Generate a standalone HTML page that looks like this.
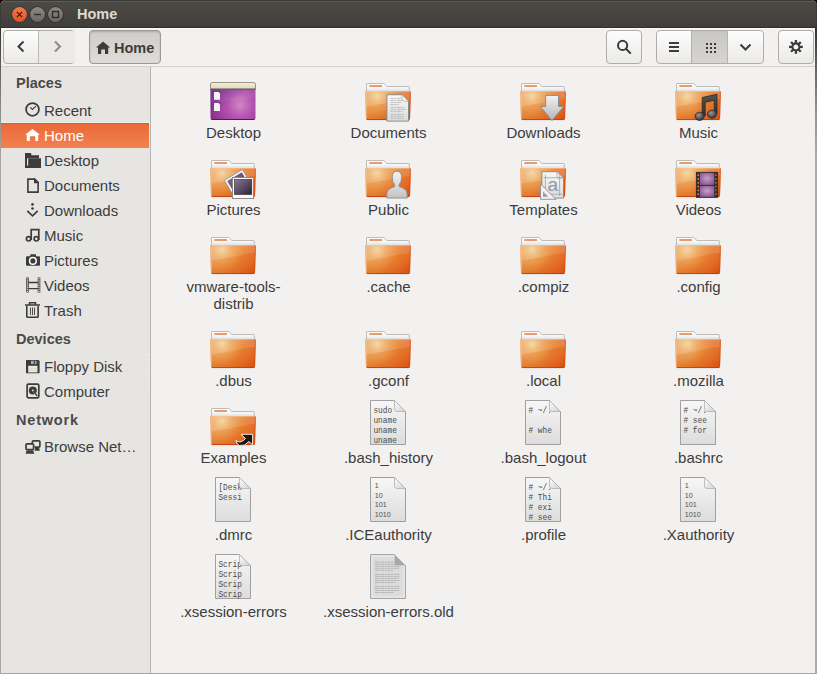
<!DOCTYPE html><html><head><meta charset="utf-8"><title>Home</title><style>
*{margin:0;padding:0;box-sizing:border-box}
html,body{width:817px;height:674px;overflow:hidden}
body{background:#1c0808;font-family:"Liberation Sans",sans-serif;position:relative}
.a{position:absolute}
.t{position:absolute;line-height:17px;white-space:nowrap}
svg{position:absolute;overflow:visible}
</style></head><body>
<div class="a" style="left:0;top:0;width:817px;height:674px;background:#f2f1f0;border-radius:6px 6px 0 0;overflow:hidden">
<div class="a" style="left:0;top:0;width:817px;height:28px;background:linear-gradient(#4f4e49 0,#4b4a45 2px,#403f3b 26px);border-bottom:1px solid #2f2e2b"></div>
<div class="a" style="left:0;top:0;width:817px;height:1px;background:#3a3935"></div>
<div class="a" style="left:5px;top:1px;width:807px;height:1px;background:#5c5b54"></div>
<div class="a" style="left:0;top:3px;width:1px;height:25px;background:#3a3935"></div>
<div class="a" style="left:816px;top:3px;width:1px;height:25px;background:#3a3935"></div>
<div class="a" style="left:0;top:28px;width:817px;height:1px;background:#fbfbfa"></div>
<div class="a" style="left:0;top:66px;width:817px;height:1px;background:#d3d0cc"></div>
<div class="a" style="left:0;top:67px;width:150px;height:607px;background:#e7e5e2"></div>
<div class="a" style="left:150px;top:67px;width:1px;height:607px;background:#b6b3ae"></div>
<div class="a" style="left:0;top:28px;width:1px;height:646px;background:linear-gradient(#2e2d2a 0,#56544f 30px,#8e8c88 80px,#a8a5a1 130px)"></div>
<div class="a" style="left:815px;top:28px;width:2px;height:646px;background:linear-gradient(#34332f 0,#5a5853 30px,#92908c 80px,#aeaba6 130px)"></div>
<div class="a" style="left:0;top:673px;width:817px;height:1px;background:#a8a5a1"></div>
</div>
<svg style="left:0;top:0" width="80" height="28">
<defs>
<linearGradient id="gClose" x1="0" y1="0" x2="0" y2="1"><stop offset="0" stop-color="#f47a4e"/><stop offset="1" stop-color="#e2541d"/></linearGradient>
<linearGradient id="gGray" x1="0" y1="0" x2="0" y2="1"><stop offset="0" stop-color="#8a8983"/><stop offset="1" stop-color="#6a6964"/></linearGradient>
</defs>
<circle cx="19.5" cy="14.5" r="8.2" fill="#34332f"/>
<circle cx="19.5" cy="14.5" r="7.4" fill="url(#gClose)"/>
<path d="M16.9 11.9 L22.1 17.1 M22.1 11.9 L16.9 17.1" stroke="#2a1a14" stroke-width="1.1"/>
<circle cx="37.5" cy="14.5" r="8.2" fill="#2e2d2a"/>
<circle cx="37.5" cy="14.5" r="7.4" fill="url(#gGray)"/>
<path d="M34 14.5 H41" stroke="#2e2d2a" stroke-width="1.4"/>
<circle cx="55.5" cy="14.5" r="8.2" fill="#2e2d2a"/>
<circle cx="55.5" cy="14.5" r="7.4" fill="url(#gGray)"/>
<rect x="52.5" y="11.5" width="6" height="6" fill="none" stroke="#2e2d2a" stroke-width="1.4"/>
</svg>
<div class="t" style="left:77px;top:6px;font-size:14.5px;color:#dfdbd2;font-weight:bold;">Home</div>
<div class="a" style="left:3px;top:30px;width:72px;height:34px;background:linear-gradient(#fdfdfd,#ebeae8);border:1px solid #b1aeaa;border-radius:4px;"></div>
<div class="a" style="left:38px;top:31px;width:37px;height:32px;background:#ecebe9;border-radius:0 3px 3px 0"></div>
<div class="a" style="left:38px;top:31px;width:1px;height:32px;background:#bdbab6"></div>
<svg style="left:0px;top:0px" width="80" height="70"><path d="M23.5 41.5 L18.5 46.5 L23.5 51.5" fill="none" stroke="#3c3c3c" stroke-width="2"/>
<path d="M55 41.5 L60 46.5 L55 51.5" fill="none" stroke="#8c8a86" stroke-width="2"/></svg>
<div class="a" style="left:89px;top:30px;width:72px;height:34px;background:linear-gradient(#d0cecb,#dedcd9);border:1px solid #9d9a96;border-radius:4px;box-shadow:inset 0 1px 2px rgba(0,0,0,0.18)"></div>
<svg style="left:96px;top:41px" width="16" height="14"><path d="M0 6.6 L7.1 0.6 L14.2 6.6 L12.2 6.6 L12.2 13 L9 13 L9 8.4 L5.2 8.4 L5.2 13 L2 13 L2 6.6 Z" fill="#3c3c3c"/></svg>
<div class="t" style="left:114px;top:39.5px;font-size:14.5px;color:#3c3c3c;font-weight:bold;">Home</div>
<div class="a" style="left:606px;top:30px;width:36px;height:34px;background:linear-gradient(#fdfdfd,#ebeae8);border:1px solid #b1aeaa;border-radius:4px;"></div>
<svg style="left:606px;top:30px" width="36" height="34"><circle cx="16.6" cy="15.4" r="4.6" fill="none" stroke="#3c3c3c" stroke-width="2"/><path d="M19.9 18.7 L24.2 23" stroke="#3c3c3c" stroke-width="2" stroke-linecap="round"/></svg>
<div class="a" style="left:656px;top:30px;width:108px;height:34px;background:linear-gradient(#fdfdfd,#ebeae8);border:1px solid #b1aeaa;border-radius:4px;"></div>
<div class="a" style="left:691px;top:31px;width:37px;height:32px;background:linear-gradient(#c4c2bf 0,#cbc9c6 2px,#d6d4d1)"></div>
<div class="a" style="left:691px;top:31px;width:1px;height:32px;background:#b3b0ac"></div>
<div class="a" style="left:727px;top:31px;width:1px;height:32px;background:#b8b5b1"></div>
<svg style="left:656px;top:30px" width="108" height="34">
<rect x="13" y="12" width="10" height="2" fill="#3c3c3c"/><rect x="13" y="16" width="10" height="2" fill="#3c3c3c"/><rect x="13" y="20" width="10" height="2" fill="#3c3c3c"/>
<g fill="#3c3c3c"><rect x="50" y="13" width="2" height="2"/><rect x="50" y="17" width="2" height="2"/><rect x="50" y="21" width="2" height="2"/><rect x="54" y="13" width="2" height="2"/><rect x="54" y="17" width="2" height="2"/><rect x="54" y="21" width="2" height="2"/><rect x="58" y="13" width="2" height="2"/><rect x="58" y="17" width="2" height="2"/><rect x="58" y="21" width="2" height="2"/></g>
<path d="M84.5 14.5 L89.5 19.5 L94.5 14.5" fill="none" stroke="#3c3c3c" stroke-width="2"/>
</svg>
<div class="a" style="left:778px;top:30px;width:36px;height:34px;background:linear-gradient(#fdfdfd,#ebeae8);border:1px solid #b1aeaa;border-radius:4px;"></div>
<svg style="left:778px;top:30px" width="36" height="34"><g transform="translate(17.9,16.9)">
<g fill="#3c3c3c"><rect x="-1.15" y="-6.9" width="2.3" height="3.3" transform="rotate(0)"/><rect x="-1.15" y="-6.9" width="2.3" height="3.3" transform="rotate(45)"/><rect x="-1.15" y="-6.9" width="2.3" height="3.3" transform="rotate(90)"/><rect x="-1.15" y="-6.9" width="2.3" height="3.3" transform="rotate(135)"/><rect x="-1.15" y="-6.9" width="2.3" height="3.3" transform="rotate(180)"/><rect x="-1.15" y="-6.9" width="2.3" height="3.3" transform="rotate(225)"/><rect x="-1.15" y="-6.9" width="2.3" height="3.3" transform="rotate(270)"/><rect x="-1.15" y="-6.9" width="2.3" height="3.3" transform="rotate(315)"/></g>
<circle r="3.5" fill="none" stroke="#3c3c3c" stroke-width="2.1"/></g></svg>
<div class="a" style="left:149px;top:354px;width:1px;height:1px;background:#fdfdfd"></div><div class="a" style="left:149px;top:359px;width:1px;height:1px;background:#fdfdfd"></div><div class="a" style="left:149px;top:364px;width:1px;height:1px;background:#fdfdfd"></div><div class="a" style="left:149px;top:369px;width:1px;height:1px;background:#fdfdfd"></div><div class="a" style="left:149px;top:374px;width:1px;height:1px;background:#fdfdfd"></div><div class="a" style="left:149px;top:379px;width:1px;height:1px;background:#fdfdfd"></div><div class="a" style="left:149px;top:384px;width:1px;height:1px;background:#fdfdfd"></div>
<div class="t" style="left:16px;top:75px;font-size:14.5px;color:#4a4a4a;font-weight:bold;">Places</div>
<div class="a" style="left:1px;top:122px;width:149px;height:1px;background:#eef0ee"></div>
<div class="a" style="left:1px;top:123px;width:148px;height:25px;background:linear-gradient(#e96a38,#f28151);border-top:1px solid #e05c26"></div>
<div class="t" style="left:44px;top:101.5px;font-size:15px;color:#3c3c3c;">Recent</div>
<div class="t" style="left:44px;top:126.5px;font-size:15px;color:#ffffff;">Home</div>
<div class="t" style="left:44px;top:151.5px;font-size:15px;color:#3c3c3c;">Desktop</div>
<div class="t" style="left:44px;top:176.5px;font-size:15px;color:#3c3c3c;">Documents</div>
<div class="t" style="left:44px;top:201.5px;font-size:15px;color:#3c3c3c;">Downloads</div>
<div class="t" style="left:44px;top:226.5px;font-size:15px;color:#3c3c3c;">Music</div>
<div class="t" style="left:44px;top:251.5px;font-size:15px;color:#3c3c3c;">Pictures</div>
<div class="t" style="left:44px;top:276.5px;font-size:15px;color:#3c3c3c;">Videos</div>
<div class="t" style="left:44px;top:301.5px;font-size:15px;color:#3c3c3c;">Trash</div>
<div class="t" style="left:16px;top:331px;font-size:14.5px;color:#4a4a4a;font-weight:bold;">Devices</div>
<div class="t" style="left:44px;top:357.5px;font-size:15px;color:#3c3c3c;">Floppy Disk</div>
<div class="t" style="left:44px;top:382.5px;font-size:15px;color:#3c3c3c;">Computer</div>
<div class="t" style="left:16px;top:411.5px;font-size:14.5px;color:#4a4a4a;font-weight:bold;letter-spacing:0.8px;">Network</div>
<div class="t" style="left:44px;top:438px;font-size:15px;color:#3c3c3c;">Browse Net…</div>
<svg style="left:0;top:0" width="150" height="470">
<circle cx="32.5" cy="109.4" r="6.4" fill="none" stroke="#3c3c3c" stroke-width="1.75"/>
<path d="M30.3 107.3 L32.5 109.5 L35.8 106.2" fill="none" stroke="#3c3c3c" stroke-width="1.2"/>
<path d="M25 134.8 L32.5 128.9 L40 134.8 L38.2 134.8 L38.2 141 L35.3 141 L35.3 136.2 L29.9 136.2 L29.9 141 L26.8 141 L26.8 134.8 Z" fill="#fff"/>
<path d="M25 153 H31 L31.5 155.2 H39 V158.3 H27 V168 H25 Z" fill="#3c3c3c"/>
<rect x="28.2" y="158.3" width="12.8" height="9.7" fill="#3c3c3c"/>
<rect x="25" y="165.6" width="16" height="2.4" fill="#3c3c3c"/>
<path d="M27.9 179.1 H34.4 L38.1 182.6 V192.1 H27.9 Z" fill="none" stroke="#3c3c3c" stroke-width="1.6"/>
<path d="M34 178.3 H35 L38.9 182.2 V183.2 H34 Z" fill="#3c3c3c"/>
<circle cx="32.5" cy="204.4" r="1.3" fill="#3c3c3c"/><circle cx="32.5" cy="208.5" r="1.3" fill="#3c3c3c"/>
<path d="M27.3 210.8 L32.5 215.8 L37.7 210.8" fill="none" stroke="#3c3c3c" stroke-width="1.7"/>
<path d="M31.2 240 V229.6 H38.8 V240" fill="none" stroke="#3c3c3c" stroke-width="1.7"/>
<circle cx="28.6" cy="238.8" r="2.2" fill="none" stroke="#3c3c3c" stroke-width="1.7"/>
<circle cx="36.3" cy="238.8" r="2.2" fill="none" stroke="#3c3c3c" stroke-width="1.7"/>
<path d="M26 257.2 Q26 256.2 27 256.2 H30.3 V254.3 H36 V256.2 H39 Q40 256.2 40 257.2 V265 Q40 265.8 39 265.8 H27 Q26 265.8 26 265 Z" fill="#3c3c3c"/>
<circle cx="32.9" cy="260.9" r="3.3" fill="none" stroke="#fff" stroke-width="1.5"/>
<path d="M27.5 277.5 V292.6 M39 277.5 V292.6" stroke="#3c3c3c" stroke-width="2.6"/>
<path d="M28.5 282.5 H38 M28.5 288.6 H38" stroke="#3c3c3c" stroke-width="1.3"/>
<g fill="#e7e5e2"><rect x="26.9" y="278.2" width="1.2" height="1.2"/><rect x="38.3" y="278.2" width="1.4" height="1.2"/><rect x="26.9" y="280.3" width="1.2" height="1.2"/><rect x="38.3" y="280.3" width="1.4" height="1.2"/><rect x="26.9" y="282.4" width="1.2" height="1.2"/><rect x="38.3" y="282.4" width="1.4" height="1.2"/><rect x="26.9" y="284.5" width="1.2" height="1.2"/><rect x="38.3" y="284.5" width="1.4" height="1.2"/><rect x="26.9" y="286.6" width="1.2" height="1.2"/><rect x="38.3" y="286.6" width="1.4" height="1.2"/><rect x="26.9" y="288.7" width="1.2" height="1.2"/><rect x="38.3" y="288.7" width="1.4" height="1.2"/><rect x="26.9" y="290.8" width="1.2" height="1.2"/><rect x="38.3" y="290.8" width="1.4" height="1.2"/></g>
<path d="M25 305.1 H40 M29.5 304.8 V302.8 H35.5 V304.8" fill="none" stroke="#3c3c3c" stroke-width="1.5"/>
<path d="M26.8 306 V316.5 Q26.8 317.3 27.6 317.3 H37.3 Q38.1 317.3 38.1 316.5 V306" fill="none" stroke="#3c3c3c" stroke-width="1.6"/>
<path d="M30.5 307.5 V315 M32.5 307.5 V315 M34.5 307.5 V315" stroke="#3c3c3c" stroke-width="0.9"/>
<path d="M26 360 H38.5 L39.6 361.1 V373.2 H26 Z" fill="#3c3c3c"/>
<rect x="31" y="360.8" width="5.6" height="3.2" fill="#b0b0b0"/>
<rect x="33.6" y="361.3" width="1.6" height="2.2" fill="#3c3c3c"/>
<rect x="28.2" y="365.8" width="9.2" height="6.6" fill="#ecece6"/>
<path d="M28.2 368.3 H37.4 M28.2 370.4 H37.4" stroke="#c8c8c0" stroke-width="0.6"/>
<rect x="27.1" y="384.1" width="11.7" height="13.7" rx="1.3" fill="none" stroke="#3c3c3c" stroke-width="1.7"/>
<circle cx="32.8" cy="390.4" r="4" fill="#3c3c3c"/>
<path d="M32.8 390.4 L37 394.2 L34.8 395.6 Z" fill="#e7e5e2"/>
<path d="M33 390.6 L37.2 396" stroke="#3c3c3c" stroke-width="1.3"/>
<circle cx="32.8" cy="390.4" r="0.9" fill="#e7e5e2"/>
<rect x="32.3" y="440.9" width="7.6" height="6.2" rx="1" fill="none" stroke="#3c3c3c" stroke-width="1.7"/>
<path d="M35.5 447 H39 L39.8 450.7 H34.5 Z" fill="#3c3c3c"/>
<rect x="25" y="443" width="9.5" height="7" fill="#e7e5e2"/>
<rect x="26" y="443.9" width="7.6" height="5.6" rx="1" fill="none" stroke="#3c3c3c" stroke-width="1.7"/>
<path d="M26.6 450.2 H33.2 L34.3 453.8 H25.6 Z" fill="#3c3c3c"/>
</svg>
<svg style="left:0;top:0" width="0" height="0"><defs>
<linearGradient id="fTab" x1="0" y1="0" x2="0" y2="1"><stop offset="0" stop-color="#ffffff"/><stop offset="0.6" stop-color="#f4f4f4"/><stop offset="1" stop-color="#d9dde0"/></linearGradient>
<linearGradient id="fBase" x1="4" y1="13" x2="44" y2="48" gradientUnits="userSpaceOnUse"><stop offset="0" stop-color="#eca462"/><stop offset="0.42" stop-color="#e98c38"/><stop offset="0.75" stop-color="#e46c24"/><stop offset="1" stop-color="#da4610"/></linearGradient>
<linearGradient id="fTop" x1="0" y1="13" x2="0" y2="42" gradientUnits="userSpaceOnUse"><stop offset="0.6" stop-color="#d8501a" stop-opacity="0"/><stop offset="1" stop-color="#d04a14" stop-opacity="0.25"/></linearGradient>
<radialGradient id="fHi" cx="14" cy="18" r="22" gradientUnits="userSpaceOnUse"><stop offset="0" stop-color="#f4d49c" stop-opacity="1"/><stop offset="0.45" stop-color="#f2c080" stop-opacity="0.45"/><stop offset="1" stop-color="#f0a060" stop-opacity="0"/></radialGradient>
<radialGradient id="fDk" cx="48" cy="14" r="12" gradientUnits="userSpaceOnUse"><stop offset="0" stop-color="#e67444" stop-opacity="0.8"/><stop offset="1" stop-color="#e67444" stop-opacity="0"/></radialGradient>
<linearGradient id="pg" x1="0" y1="0" x2="0" y2="1"><stop offset="0" stop-color="#f7f7f7"/><stop offset="1" stop-color="#dcdcdc"/></linearGradient>
<linearGradient id="pgF" x1="0" y1="0" x2="1" y2="1"><stop offset="0" stop-color="#ffffff"/><stop offset="1" stop-color="#d0d0d0"/></linearGradient>
<linearGradient id="arr" x1="0" y1="0" x2="0" y2="1"><stop offset="0" stop-color="#f2f2f2"/><stop offset="1" stop-color="#b4b4b4"/></linearGradient>
<linearGradient id="note" x1="0" y1="0" x2="0" y2="1"><stop offset="0" stop-color="#555"/><stop offset="1" stop-color="#2e2e2e"/></linearGradient>
<radialGradient id="noteH" cx="0.4" cy="0.35" r="0.6"><stop offset="0" stop-color="#9a9a9a"/><stop offset="1" stop-color="#3a3a3a"/></radialGradient>
<linearGradient id="photo" x1="0" y1="0" x2="1" y2="1"><stop offset="0" stop-color="#907898"/><stop offset="1" stop-color="#2a2030"/></linearGradient>
<linearGradient id="person" x1="0" y1="0" x2="0" y2="1"><stop offset="0" stop-color="#f2f2f2"/><stop offset="1" stop-color="#c4c4c4"/></linearGradient>
<radialGradient id="film" cx="0.5" cy="0.45" r="0.7"><stop offset="0" stop-color="#c8a0c8"/><stop offset="1" stop-color="#7e4a8c"/></radialGradient>
<radialGradient id="desk" cx="32" cy="27" r="32" gradientUnits="userSpaceOnUse"><stop offset="0" stop-color="#d488c4"/><stop offset="0.4" stop-color="#b452b0"/><stop offset="1" stop-color="#8a2c8c"/></radialGradient><linearGradient id="deskSh" x1="0" y1="0" x2="1" y2="1"><stop offset="0" stop-color="#402070" stop-opacity="0.5"/><stop offset="0.45" stop-color="#402070" stop-opacity="0"/></linearGradient>
<linearGradient id="deskTop" x1="0" y1="0" x2="0" y2="1"><stop offset="0" stop-color="#f2f0e0"/><stop offset="1" stop-color="#dcd8bc"/></linearGradient>
<g id="fold">
<path d="M3.5 13.5 V6 Q3.5 5.5 4 5.5 H20.8 L24 8.5 H45.8 Q46.3 8.5 46.3 9 V13.5 Z" fill="url(#fTab)" stroke="#bcbcbc" stroke-width="1"/>
<rect x="6.3" y="7" width="12.7" height="2" fill="#ee9a66"/>
<path d="M2 13 H48 L47 40.5 Q47 42 45.5 42 H4.5 Q3 42 3 40.5 Z" fill="url(#fBase)"/>
<path d="M2 13 H48 L47 40.5 Q47 42 45.5 42 H4.5 Q3 42 3 40.5 Z" fill="url(#fTop)"/>
<path d="M2 13 H48 L47 40.5 Q47 42 45.5 42 H4.5 Q3 42 3 40.5 Z" fill="url(#fHi)"/>
<path d="M2 13 H48 L47 40.5 Q47 42 45.5 42 H4.5 Q3 42 3 40.5 Z" fill="url(#fDk)"/>
<path d="M2 13 H48 L47.6 20.5 L2.6 29 Z" fill="#fff" opacity="0.10"/>
<path d="M2.6 29 L47.6 20.5 L47 40.5 Q47 42 45.5 42 H4.5 Q3 42 3 40.5 Z" fill="#d86a20" opacity="0.10"/>
<path d="M2.6 13.5 H47.4 M2.9 14 L3.7 40.5" stroke="#f8c8a0" stroke-width="0.9" opacity="0.55" fill="none"/>
<path d="M4 41.5 H46" stroke="#be380a" stroke-width="1" opacity="0.75"/>
<path d="M47.3 14.5 L46.6 40.5" stroke="#c8420e" stroke-width="0.8" opacity="0.5"/>
<path d="M4.5 42.6 H45.5" stroke="#000" stroke-width="1" opacity="0.06"/>
</g>
</defs></svg>
<svg style="left:208px;top:78px" width="50" height="50" viewBox="0 0 50 50"><path d="M2.5 6.5 Q2.5 4.5 4.5 4.5 H45.5 Q47.5 4.5 47.5 6.5 V40 Q47.5 42 45.5 42 H4.5 Q2.5 42 2.5 40 Z" fill="url(#desk)"/><path d="M2.5 11 H47.5 V40 Q47.5 42 45.5 42 H4.5 Q2.5 42 2.5 40 Z" fill="url(#deskSh)"/><path d="M2.5 11 H47.5 V20 L2.5 25 Z" fill="#fff" opacity="0.07"/><path d="M2.5 6.5 Q2.5 4.5 4.5 4.5 H45.5 Q47.5 4.5 47.5 6.5 V11 H2.5 Z" fill="url(#deskTop)" stroke="#8a8a6a" stroke-width="0.8"/><path d="M2.5 11.2 H47.5" stroke="#5a5a3a" stroke-width="1"/><path d="M3.5 41.5 H46.5" stroke="#6a0a6a" stroke-width="1"/><path d="M6 14 H10.5 L12 15.5 V21.8 H6 Z M6 25 H10.5 L12 26.5 V33 H6 Z" fill="#f4f4f4"/></svg>
<div class="t" style="left:153.5px;top:124px;font-size:15px;color:#3c3c3c;width:160px;text-align:center;">Desktop</div>
<svg style="left:363px;top:78px" width="50" height="50" viewBox="0 0 50 50"><use href="#fold"/><path d="M23.9 16.7 H39 L45.5 23.2 V43.1 H23.9 Z" fill="url(#pg)" stroke="#8a8a8a" stroke-width="1"/><path d="M27.5 20.5 H38" stroke="#8e8e8e" stroke-width="0.5" stroke-dasharray="3 0.7 2 0.7 4 0.7"/><path d="M27.5 22.5 H41" stroke="#8e8e8e" stroke-width="0.5" stroke-dasharray="3 0.7 2 0.7 4 0.7"/><path d="M27.5 24.5 H39" stroke="#8e8e8e" stroke-width="0.5" stroke-dasharray="3 0.7 2 0.7 4 0.7"/><path d="M27.5 26.5 H35.5" stroke="#8e8e8e" stroke-width="0.5" stroke-dasharray="3 0.7 2 0.7 4 0.7"/><path d="M27.5 29.3 H41" stroke="#8e8e8e" stroke-width="0.5" stroke-dasharray="3 0.7 2 0.7 4 0.7"/><path d="M27.5 31.3 H43" stroke="#8e8e8e" stroke-width="0.5" stroke-dasharray="3 0.7 2 0.7 4 0.7"/><path d="M27.5 33.3 H39.5" stroke="#8e8e8e" stroke-width="0.5" stroke-dasharray="3 0.7 2 0.7 4 0.7"/><path d="M27.5 36.3 H41" stroke="#8e8e8e" stroke-width="0.5" stroke-dasharray="3 0.7 2 0.7 4 0.7"/><path d="M27.5 38.3 H40.5" stroke="#8e8e8e" stroke-width="0.5" stroke-dasharray="3 0.7 2 0.7 4 0.7"/><path d="M27.5 40.3 H41" stroke="#8e8e8e" stroke-width="0.5" stroke-dasharray="3 0.7 2 0.7 4 0.7"/><path d="M39 16.7 V21 Q39 23.2 41.2 23.2 H45.5 Z" fill="#f4f4f4" stroke="#a0a0a0" stroke-width="0.7"/></svg>
<div class="t" style="left:308.5px;top:124px;font-size:15px;color:#3c3c3c;width:160px;text-align:center;">Documents</div>
<svg style="left:518px;top:78px" width="50" height="50" viewBox="0 0 50 50"><use href="#fold"/><path d="M27.6 17.4 H40.5 V28.5 H45.6 L34 42.5 L22.3 28.5 H27.6 Z" fill="url(#arr)" stroke="#8c8c8c" stroke-width="1"/></svg>
<div class="t" style="left:463.5px;top:124px;font-size:15px;color:#3c3c3c;width:160px;text-align:center;">Downloads</div>
<svg style="left:673px;top:78px" width="50" height="50" viewBox="0 0 50 50"><use href="#fold"/><path d="M29.2 19.5 L44 16.3 V35.5 H41.3 V22.2 L32.2 24.3 V38 H29.2 Z" fill="url(#note)" stroke="#2a2a2a" stroke-width="0.8"/><ellipse cx="26.6" cy="38.3" rx="4.6" ry="4.1" fill="url(#noteH)" stroke="#2a2a2a" stroke-width="0.8"/><ellipse cx="39" cy="36.2" rx="4.6" ry="4.1" fill="url(#noteH)" stroke="#2a2a2a" stroke-width="0.8"/></svg>
<div class="t" style="left:618.5px;top:124px;font-size:15px;color:#3c3c3c;width:160px;text-align:center;">Music</div>
<svg style="left:208px;top:155px" width="50" height="50" viewBox="0 0 50 50"><use href="#fold"/><path d="M16.4 25.3 L34.4 14.6 L45.1 32.6 L27.1 43.3 Z" fill="#fafafa" stroke="#8a8a8a" stroke-width="0.8"/><path d="M19.2 25.9 L33.8 17.3 L42.4 31.9 L27.8 40.5 Z" fill="url(#photo)"/><rect x="24.5" y="22.5" width="21" height="21" fill="#fafafa" stroke="#8a8a8a" stroke-width="1"/><rect x="26.3" y="24.3" width="17.5" height="15.3" fill="url(#photo)" stroke="#222" stroke-width="0.5"/></svg>
<div class="t" style="left:153.5px;top:201px;font-size:15px;color:#3c3c3c;width:160px;text-align:center;">Pictures</div>
<svg style="left:363px;top:155px" width="50" height="50" viewBox="0 0 50 50"><use href="#fold"/><path d="M23.7 43 Q23.3 36 26 34.2 Q29 32.3 31.6 31.6 V29.5 Q29.2 27 29.2 22.4 Q29.2 16.2 33.9 16.2 Q38.6 16.2 38.6 22.4 Q38.6 27 36.2 29.5 V31.6 Q38.8 32.3 41.8 34.2 Q44.5 36 44.3 43 Z" fill="url(#person)" stroke="#8a8a8a" stroke-width="0.9"/></svg>
<div class="t" style="left:308.5px;top:201px;font-size:15px;color:#3c3c3c;width:160px;text-align:center;">Public</div>
<svg style="left:518px;top:155px" width="50" height="50" viewBox="0 0 50 50"><use href="#fold"/><path d="M23.9 16.7 H39 L45.5 23.2 V43.1 H23.9 Z" fill="url(#pg)" stroke="#8a8a8a" stroke-width="1"/><path d="M39 16.7 V21 Q39 23.2 41.2 23.2 H45.5 Z" fill="#f4f4f4" stroke="#a0a0a0" stroke-width="0.7"/><path d="M27.4 19.5 V41 M41.6 19.5 V41 M25.5 22.7 H44.5 M25.5 39.2 H44.5" stroke="#9098a8" stroke-width="0.7"/><text x="29.6" y="35.6" font-family="Liberation Sans" font-size="19" fill="#9098a8">a</text><path d="M22.5 28.8 V44.3 H38 Z" fill="#f0f0f0" stroke="#8a8a9a" stroke-width="0.9"/><path d="M25 36.5 V41.8 H30.3 Z" fill="#9a9aaa"/></svg>
<div class="t" style="left:463.5px;top:201px;font-size:15px;color:#3c3c3c;width:160px;text-align:center;">Templates</div>
<svg style="left:673px;top:155px" width="50" height="50" viewBox="0 0 50 50"><use href="#fold"/><rect x="23.2" y="17.2" width="21.6" height="25.4" fill="#2e2e2e" stroke="#222" stroke-width="0.6"/><rect x="26.9" y="17.9" width="14.3" height="12" fill="url(#film)"/><rect x="26.9" y="30.9" width="14.3" height="11" fill="url(#film)"/><rect x="24.6" y="19.3" width="1.3" height="1.7" fill="#f0904a"/><rect x="42.2" y="19.3" width="1.3" height="1.7" fill="#e86a2a"/><rect x="24.6" y="23.1" width="1.3" height="1.7" fill="#f0904a"/><rect x="42.2" y="23.1" width="1.3" height="1.7" fill="#e86a2a"/><rect x="24.6" y="26.9" width="1.3" height="1.7" fill="#f0904a"/><rect x="42.2" y="26.9" width="1.3" height="1.7" fill="#e86a2a"/><rect x="24.6" y="30.7" width="1.3" height="1.7" fill="#f0904a"/><rect x="42.2" y="30.7" width="1.3" height="1.7" fill="#e86a2a"/><rect x="24.6" y="34.5" width="1.3" height="1.7" fill="#f0904a"/><rect x="42.2" y="34.5" width="1.3" height="1.7" fill="#e86a2a"/><rect x="24.6" y="38.3" width="1.3" height="1.7" fill="#f0904a"/><rect x="42.2" y="38.3" width="1.3" height="1.7" fill="#e86a2a"/></svg>
<div class="t" style="left:618.5px;top:201px;font-size:15px;color:#3c3c3c;width:160px;text-align:center;">Videos</div>
<svg style="left:208px;top:232px" width="50" height="50" viewBox="0 0 50 50"><use href="#fold"/></svg>
<div class="t" style="left:153.5px;top:278px;font-size:15px;color:#3c3c3c;width:160px;text-align:center;">vmware-tools-</div>
<div class="t" style="left:153.5px;top:295px;font-size:15px;color:#3c3c3c;width:160px;text-align:center;">distrib</div>
<svg style="left:363px;top:232px" width="50" height="50" viewBox="0 0 50 50"><use href="#fold"/></svg>
<div class="t" style="left:308.5px;top:278px;font-size:15px;color:#3c3c3c;width:160px;text-align:center;">.cache</div>
<svg style="left:518px;top:232px" width="50" height="50" viewBox="0 0 50 50"><use href="#fold"/></svg>
<div class="t" style="left:463.5px;top:278px;font-size:15px;color:#3c3c3c;width:160px;text-align:center;">.compiz</div>
<svg style="left:673px;top:232px" width="50" height="50" viewBox="0 0 50 50"><use href="#fold"/></svg>
<div class="t" style="left:618.5px;top:278px;font-size:15px;color:#3c3c3c;width:160px;text-align:center;">.config</div>
<svg style="left:208px;top:326px" width="50" height="50" viewBox="0 0 50 50"><use href="#fold"/></svg>
<div class="t" style="left:153.5px;top:372px;font-size:15px;color:#3c3c3c;width:160px;text-align:center;">.dbus</div>
<svg style="left:363px;top:326px" width="50" height="50" viewBox="0 0 50 50"><use href="#fold"/></svg>
<div class="t" style="left:308.5px;top:372px;font-size:15px;color:#3c3c3c;width:160px;text-align:center;">.gconf</div>
<svg style="left:518px;top:326px" width="50" height="50" viewBox="0 0 50 50"><use href="#fold"/></svg>
<div class="t" style="left:463.5px;top:372px;font-size:15px;color:#3c3c3c;width:160px;text-align:center;">.local</div>
<svg style="left:673px;top:326px" width="50" height="50" viewBox="0 0 50 50"><use href="#fold"/></svg>
<div class="t" style="left:618.5px;top:372px;font-size:15px;color:#3c3c3c;width:160px;text-align:center;">.mozilla</div>
<svg style="left:208px;top:403px" width="50" height="50" viewBox="0 0 50 50"><use href="#fold"/><path d="M33 31.3 H44.6 V42 L41 38.5 Q37 43.5 31.5 42.5 Q29 42 27.9 37.3 Q31 40.5 35.5 37.5 L37.5 35.5 Z" fill="#1c1614" stroke="#fff" stroke-width="0.9"/></svg>
<div class="t" style="left:153.5px;top:449px;font-size:15px;color:#3c3c3c;width:160px;text-align:center;">Examples</div>
<svg style="left:363px;top:403px" width="50" height="50" viewBox="0 0 50 50"><path d="M7.5 -2.5 H31.5 L42.5 8.5 V41.5 H7.5 Z" fill="url(#pg)" stroke="#a0a0a0" stroke-width="1"/><text transform="translate(10.4,9.6) scale(0.84,1)" font-family="Liberation Mono" font-size="9.3" fill="#4e4a48">sudo</text><text transform="translate(10.4,19.6) scale(0.84,1)" font-family="Liberation Mono" font-size="9.3" fill="#4e4a48">uname</text><text transform="translate(10.4,29.6) scale(0.84,1)" font-family="Liberation Mono" font-size="9.3" fill="#4e4a48">uname</text><text transform="translate(10.4,39.6) scale(0.84,1)" font-family="Liberation Mono" font-size="9.3" fill="#4e4a48">uname</text><path d="M31.5 -2.5 V6 Q31.5 8.5 34 8.5 H42.5 Z" fill="url(#pgF)" stroke="#b0b0b0" stroke-width="0.8"/></svg>
<div class="t" style="left:308.5px;top:449px;font-size:15px;color:#3c3c3c;width:160px;text-align:center;">.bash_history</div>
<svg style="left:518px;top:403px" width="50" height="50" viewBox="0 0 50 50"><path d="M7.5 -2.5 H31.5 L42.5 8.5 V41.5 H7.5 Z" fill="url(#pg)" stroke="#a0a0a0" stroke-width="1"/><text transform="translate(10.4,9.6) scale(0.84,1)" font-family="Liberation Mono" font-size="9.3" fill="#4e4a48"># ~/.</text><text transform="translate(10.4,29.6) scale(0.84,1)" font-family="Liberation Mono" font-size="9.3" fill="#4e4a48"># whe</text><path d="M31.5 -2.5 V6 Q31.5 8.5 34 8.5 H42.5 Z" fill="url(#pgF)" stroke="#b0b0b0" stroke-width="0.8"/></svg>
<div class="t" style="left:463.5px;top:449px;font-size:15px;color:#3c3c3c;width:160px;text-align:center;">.bash_logout</div>
<svg style="left:673px;top:403px" width="50" height="50" viewBox="0 0 50 50"><path d="M7.5 -2.5 H31.5 L42.5 8.5 V41.5 H7.5 Z" fill="url(#pg)" stroke="#a0a0a0" stroke-width="1"/><text transform="translate(10.4,9.6) scale(0.84,1)" font-family="Liberation Mono" font-size="9.3" fill="#4e4a48"># ~/.</text><text transform="translate(10.4,19.6) scale(0.84,1)" font-family="Liberation Mono" font-size="9.3" fill="#4e4a48"># see</text><text transform="translate(10.4,29.6) scale(0.84,1)" font-family="Liberation Mono" font-size="9.3" fill="#4e4a48"># for</text><path d="M31.5 -2.5 V6 Q31.5 8.5 34 8.5 H42.5 Z" fill="url(#pgF)" stroke="#b0b0b0" stroke-width="0.8"/></svg>
<div class="t" style="left:618.5px;top:449px;font-size:15px;color:#3c3c3c;width:160px;text-align:center;">.bashrc</div>
<svg style="left:208px;top:480px" width="50" height="50" viewBox="0 0 50 50"><path d="M7.5 -2.5 H31.5 L42.5 8.5 V41.5 H7.5 Z" fill="url(#pg)" stroke="#a0a0a0" stroke-width="1"/><text transform="translate(10.4,9.6) scale(0.84,1)" font-family="Liberation Mono" font-size="9.3" fill="#4e4a48">[Desk</text><text transform="translate(10.4,19.6) scale(0.84,1)" font-family="Liberation Mono" font-size="9.3" fill="#4e4a48">Sessi</text><path d="M31.5 -2.5 V6 Q31.5 8.5 34 8.5 H42.5 Z" fill="url(#pgF)" stroke="#b0b0b0" stroke-width="0.8"/></svg>
<div class="t" style="left:153.5px;top:526px;font-size:15px;color:#3c3c3c;width:160px;text-align:center;">.dmrc</div>
<svg style="left:363px;top:480px" width="50" height="50" viewBox="0 0 50 50"><path d="M7.5 -2.5 H31.5 L42.5 8.5 V41.5 H7.5 Z" fill="url(#pg)" stroke="#a0a0a0" stroke-width="1"/><text x="11.8" y="8.0" font-family="Liberation Sans" font-size="7.2" fill="#505050">1</text><text x="11.8" y="17.5" font-family="Liberation Sans" font-size="7.2" fill="#505050">10</text><text x="11.8" y="27.0" font-family="Liberation Sans" font-size="7.2" fill="#505050">101</text><text x="11.8" y="36.5" font-family="Liberation Sans" font-size="7.2" fill="#505050">1010</text><path d="M31.5 -2.5 V6 Q31.5 8.5 34 8.5 H42.5 Z" fill="url(#pgF)" stroke="#b0b0b0" stroke-width="0.8"/></svg>
<div class="t" style="left:308.5px;top:526px;font-size:15px;color:#3c3c3c;width:160px;text-align:center;">.ICEauthority</div>
<svg style="left:518px;top:480px" width="50" height="50" viewBox="0 0 50 50"><path d="M7.5 -2.5 H31.5 L42.5 8.5 V41.5 H7.5 Z" fill="url(#pg)" stroke="#a0a0a0" stroke-width="1"/><text transform="translate(10.4,9.6) scale(0.84,1)" font-family="Liberation Mono" font-size="9.3" fill="#4e4a48"># ~/.</text><text transform="translate(10.4,19.6) scale(0.84,1)" font-family="Liberation Mono" font-size="9.3" fill="#4e4a48"># Thi</text><text transform="translate(10.4,29.6) scale(0.84,1)" font-family="Liberation Mono" font-size="9.3" fill="#4e4a48"># exi</text><text transform="translate(10.4,39.6) scale(0.84,1)" font-family="Liberation Mono" font-size="9.3" fill="#4e4a48"># see</text><path d="M31.5 -2.5 V6 Q31.5 8.5 34 8.5 H42.5 Z" fill="url(#pgF)" stroke="#b0b0b0" stroke-width="0.8"/></svg>
<div class="t" style="left:463.5px;top:526px;font-size:15px;color:#3c3c3c;width:160px;text-align:center;">.profile</div>
<svg style="left:673px;top:480px" width="50" height="50" viewBox="0 0 50 50"><path d="M7.5 -2.5 H31.5 L42.5 8.5 V41.5 H7.5 Z" fill="url(#pg)" stroke="#a0a0a0" stroke-width="1"/><text x="11.8" y="8.0" font-family="Liberation Sans" font-size="7.2" fill="#505050">1</text><text x="11.8" y="17.5" font-family="Liberation Sans" font-size="7.2" fill="#505050">10</text><text x="11.8" y="27.0" font-family="Liberation Sans" font-size="7.2" fill="#505050">101</text><text x="11.8" y="36.5" font-family="Liberation Sans" font-size="7.2" fill="#505050">1010</text><path d="M31.5 -2.5 V6 Q31.5 8.5 34 8.5 H42.5 Z" fill="url(#pgF)" stroke="#b0b0b0" stroke-width="0.8"/></svg>
<div class="t" style="left:618.5px;top:526px;font-size:15px;color:#3c3c3c;width:160px;text-align:center;">.Xauthority</div>
<svg style="left:208px;top:557px" width="50" height="50" viewBox="0 0 50 50"><path d="M7.5 -2.5 H31.5 L42.5 8.5 V41.5 H7.5 Z" fill="url(#pg)" stroke="#a0a0a0" stroke-width="1"/><text transform="translate(10.4,9.6) scale(0.84,1)" font-family="Liberation Mono" font-size="9.3" fill="#4e4a48">Scrip</text><text transform="translate(10.4,19.6) scale(0.84,1)" font-family="Liberation Mono" font-size="9.3" fill="#4e4a48">Scrip</text><text transform="translate(10.4,29.6) scale(0.84,1)" font-family="Liberation Mono" font-size="9.3" fill="#4e4a48">Scrip</text><text transform="translate(10.4,39.6) scale(0.84,1)" font-family="Liberation Mono" font-size="9.3" fill="#4e4a48">Scrip</text><path d="M31.5 -2.5 V6 Q31.5 8.5 34 8.5 H42.5 Z" fill="url(#pgF)" stroke="#b0b0b0" stroke-width="0.8"/></svg>
<div class="t" style="left:153.5px;top:603px;font-size:15px;color:#3c3c3c;width:160px;text-align:center;">.xsession-errors</div>
<svg style="left:363px;top:557px" width="50" height="50" viewBox="0 0 50 50"><path d="M7.5 -2.5 H31.5 L42.5 8.5 V41.5 H7.5 Z" fill="#dcdcdc" stroke="#a6a6a6" stroke-width="1"/><path d="M9 -1 H31 L41 9 V40 H9 Z" fill="none" stroke="#ececec" stroke-width="1"/><path d="M12 5.2 H37" stroke="#a8a8a8" stroke-width="0.75" stroke-dasharray="3 0.6 2 0.6"/><path d="M12 7.2 H37" stroke="#a8a8a8" stroke-width="0.75" stroke-dasharray="3 0.6 2 0.6"/><path d="M12 9.3 H37" stroke="#a8a8a8" stroke-width="0.75" stroke-dasharray="3 0.6 2 0.6"/><path d="M12 11.3 H37" stroke="#a8a8a8" stroke-width="0.75" stroke-dasharray="3 0.6 2 0.6"/><path d="M12 13.4 H30" stroke="#a8a8a8" stroke-width="0.75" stroke-dasharray="3 0.6 2 0.6"/><path d="M12 17.4 H37" stroke="#a8a8a8" stroke-width="0.75" stroke-dasharray="3 0.6 2 0.6"/><path d="M12 19.4 H37" stroke="#a8a8a8" stroke-width="0.75" stroke-dasharray="3 0.6 2 0.6"/><path d="M12 21.4 H36" stroke="#a8a8a8" stroke-width="0.75" stroke-dasharray="3 0.6 2 0.6"/><path d="M12 23.5 H37" stroke="#a8a8a8" stroke-width="0.75" stroke-dasharray="3 0.6 2 0.6"/><path d="M12 25.5 H32" stroke="#a8a8a8" stroke-width="0.75" stroke-dasharray="3 0.6 2 0.6"/><path d="M12 29.4 H37" stroke="#a8a8a8" stroke-width="0.75" stroke-dasharray="3 0.6 2 0.6"/><path d="M12 31.4 H37" stroke="#a8a8a8" stroke-width="0.75" stroke-dasharray="3 0.6 2 0.6"/><path d="M12 33.5 H36" stroke="#a8a8a8" stroke-width="0.75" stroke-dasharray="3 0.6 2 0.6"/><path d="M12 35.5 H31" stroke="#a8a8a8" stroke-width="0.75" stroke-dasharray="3 0.6 2 0.6"/><path d="M31.5 -2.5 L42.5 8.5 H31.5 Z" fill="#f4f4f4"/><path d="M31.5 -2.5 V8.5 H42.5 Z" fill="#a8a8a8"/></svg>
<div class="t" style="left:308.5px;top:603px;font-size:15px;color:#3c3c3c;width:160px;text-align:center;">.xsession-errors.old</div>
</body></html>
